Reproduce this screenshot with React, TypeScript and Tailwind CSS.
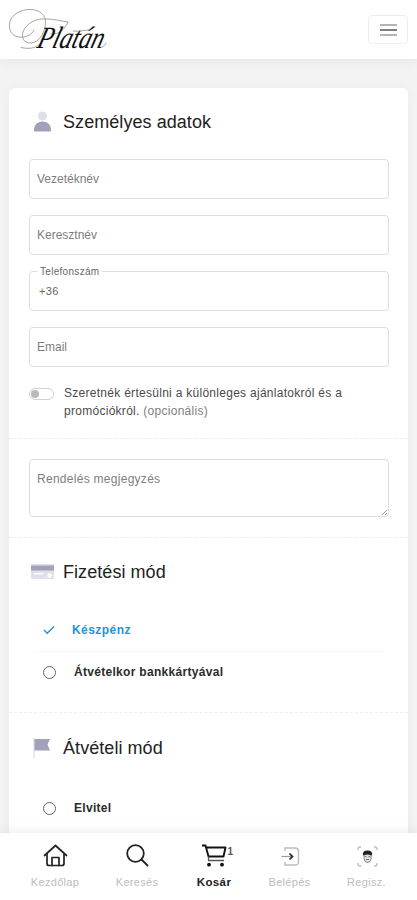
import type { ReactNode } from "react";

const NAV_LABEL = "leading-[14px] whitespace-nowrap";

function Logo() {
  return (
    <svg width="110" height="50" viewBox="0 0 110 50" className="block overflow-visible">
      <g fill="none" stroke="#9a9a9a" strokeWidth="0.9" strokeLinecap="round">
        <path d="M25 22C23 27 16 30 10 29C3 28 0 23 0.500 16C1 7 12 1 22 1.500C31 2 37 7 36.500 15C36 24 31 34 22 35C15 35 12 30 14 24C17 15 28 10 38 11C46 11 51 13 59 14" />
        <path d="M12 39.500C18 41 26 41 31 36" />
        <path d="M59 14C56 21 50 27 42 26" />
        <path d="M64 23C70 24 76 22 81 22" />
        <path d="M92 39C94 40 96 37 97 35" />
      </g>
      <g transform="translate(27 39.500) skewX(-16)">
        <text
          x="0"
          y="0"
          fill="#111"
          fontFamily="'Liberation Serif', serif"
          fontStyle="italic"
          fontSize="31"
          textLength="66"
          lengthAdjust="spacingAndGlyphs"
        >
          Platán
        </text>
      </g>
    </svg>
  );
}

function Field({ label, value }: { label: string; value?: string }) {
  return (
    <div className="relative h-10 rounded-sm border border-[#dcdfe2] px-2 flex items-center text-xs text-[#7b7f83]">
      {value ? (
        <>
          <span className="absolute -top-1.5 left-[7px] bg-white px-[3px] text-[10px] leading-3 text-[#666] tracking-[0.3px]">
            {label}
          </span>
          <span className="pl-px text-[11px] text-[#666] tracking-[0.3px]">{value}</span>
        </>
      ) : (
        <span className="-ml-px">{label}</span>
      )}
    </div>
  );
}

function SectionTitle({ icon, children }: { icon: ReactNode; children: ReactNode }) {
  return (
    <div className="flex items-center h-6">
      <span className="w-[34px] flex">{icon}</span>
      <h2 className="text-[18px] leading-6 tracking-[0.06px] text-[#222]">{children}</h2>
    </div>
  );
}

function Radio({ label }: { label: string }) {
  return (
    <div className="flex items-center h-5 pl-[14px]">
      <span className="w-[13px] h-[13px] rounded-full border border-[#666]" />
      <span className="ml-[18px] text-xs font-bold tracking-[0.3px] text-[#2b2b2b]">{label}</span>
    </div>
  );
}

function UserIcon() {
  return (
    <svg width="26" height="22" viewBox="0 0 26 22">
      <circle cx="13.500" cy="5" r="4.500" fill="#dedfe8" />
      <path d="M5 19.500C5 14 8 10.500 13.500 10.500S22 14 22 19.500Q22 20.500 21 20.500H6Q5 20.500 5 19.500Z" fill="#a0a2b9" />
    </svg>
  );
}

function CardIcon() {
  return (
    <svg width="26" height="18" viewBox="0 0 26 18">
      <rect x="2" y="1" width="23" height="15" rx="1" fill="#dfe0e8" />
      <path d="M2 2.500H25V7.500H2Z" fill="#a0a2b9" />
      <path d="M5 10H14V11.500H5Z" fill="#fff" />
      <circle cx="20.500" cy="12.500" r="2.200" fill="#fff" />
    </svg>
  );
}

function FlagIcon() {
  return (
    <svg width="26" height="24" viewBox="0 0 26 24">
      <path d="M4.500 2H5.500V22.500H4.500Z" fill="#d3d4de" />
      <path d="M5.500 3H21L18.500 8.500L21 14.500H5.500Z" fill="#a0a2b9" />
    </svg>
  );
}

function HomeIcon() {
  return (
    <svg width="26" height="26" viewBox="0 0 26 26" fill="none" stroke="#222" strokeWidth="1.700" strokeLinecap="round" strokeLinejoin="round">
      <path d="M2.500 12.500L13.500 2.500L24.500 12.500" />
      <path d="M5 11V20.500Q5 22.500 7 22.500H20Q22 22.500 22 20.500V11" />
      <path d="M10 22.500V14.500H17V22.500" />
    </svg>
  );
}

function SearchIcon() {
  return (
    <svg width="26" height="26" viewBox="0 0 26 26" fill="none" stroke="#222" strokeWidth="1.800" strokeLinecap="round">
      <circle cx="11.500" cy="10.500" r="8.300" />
      <path d="M17.500 16.500L23.500 22.500" />
    </svg>
  );
}

function CartIcon() {
  return (
    <svg width="28" height="26" viewBox="0 0 28 26" fill="none" stroke="#111" strokeWidth="1.900" strokeLinejoin="round">
      <path d="M2 2.500H5.500L8.500 13.500H23.500L25.500 4.500H6" />
      <path d="M8.500 13.500V17.500H24" strokeWidth="1.300" stroke="#555" />
      <circle cx="9" cy="21.700" r="1.900" fill="#111" stroke="none" />
      <circle cx="22" cy="21.700" r="1.900" fill="#111" stroke="none" />
    </svg>
  );
}

function LoginIcon() {
  return (
    <svg width="22" height="24" viewBox="0 0 22 24" fill="none">
      <path d="M6 7V4H16Q19.500 4 19.500 7V18Q19.500 21 16 21H6V18" stroke="#bcbcbc" strokeWidth="1.400" />
      <path d="M2.500 12.500H13" stroke="#999" strokeWidth="1.200" />
      <path d="M10.500 9.500L13.500 12.500L10.500 15.500" stroke="#222" strokeWidth="1.700" />
    </svg>
  );
}

function FaceIcon() {
  return (
    <svg width="24" height="24" viewBox="0 0 24 24" fill="none">
      <path d="M3 6V5Q3 3 5 3H6M19 3H20Q22 3 22 5V6M22 19V20Q22 22 20 22H19M6 22H5Q3 22 3 20V19" stroke="#bbb" strokeWidth="1.300" />
      <path d="M9 10V15Q9.500 18.500 12.500 18.500T16 15V10Z" fill="#ddd" stroke="#888" />
      <path d="M8 11.500Q7 6.500 12.500 6.500T17 11.500Q12.500 9.500 8 11.500Z" fill="#222" />
      <path d="M10 12.500H11.500M13.500 12.500H15M11 15.500H14" stroke="#777" />
    </svg>
  );
}

const NAV_ITEMS = [
  { label: "Kezdőlap", icon: <HomeIcon />, width: "w-[82px]" },
  { label: "Keresés", icon: <SearchIcon />, width: "w-[82px]" },
  { label: "Kosár", icon: <CartIcon />, width: "w-[72px]", active: true, badge: "1" },
  { label: "Belépés", icon: <LoginIcon />, width: "w-[79px]" },
  { label: "Regisz.", icon: <FaceIcon />, width: "w-[75px]" },
];

export default function App() {
  return (
    <div className="h-[900px] flex flex-col overflow-hidden bg-[#f3f3f4] font-['Liberation_Sans',sans-serif]">
      <header className="relative h-[59px] shrink-0 bg-white flex justify-between items-start px-[9px] shadow-[0_3px_12px_rgba(0,0,0,0.05)]">
        <div className="pt-2">
          <Logo />
        </div>
        <button className="mt-[15px] w-10 h-[29px] rounded border border-[#ededee] flex flex-col items-center justify-center gap-[3px]">
          <span className="w-[17px] h-0.5 bg-[#b5b5b5]" />
          <span className="w-[17px] h-0.5 bg-[#808080]" />
          <span className="w-[17px] h-0.5 bg-[#b5b5b5]" />
        </button>
      </header>

      <main className="flex-1 min-h-0 overflow-hidden pt-[29px] px-[9px]">
        <div className="h-[800px] bg-white rounded-md shadow-[0_0_12px_rgba(0,0,0,0.04)]">
          <section className="px-5 pt-[22px] h-[351px] border-b border-dashed border-[#eeeef0]">
            <SectionTitle icon={<UserIcon />}>Személyes adatok</SectionTitle>
            <div className="mt-[25px] w-[360px] flex flex-col gap-4">
              <Field label="Vezetéknév" />
              <Field label="Keresztnév" />
              <Field label="Telefonszám" value="+36" />
              <Field label="Email" />
            </div>
            <div className="mt-[17px] flex">
              <span className="mt-1 w-[25px] h-3 rounded-full border border-[#d0d0d0] flex items-center px-px">
                <span className="w-2 h-2 rounded-full bg-[#bababa]" />
              </span>
              <p className="ml-[10px] text-xs leading-[18px] tracking-[0.28px] whitespace-nowrap text-[#4a4a4a]">
                Szeretnék értesülni a különleges ajánlatokról és a
                <br />
                promóciókról. <span className="text-[#808080]">(opcionális)</span>
              </p>
            </div>
          </section>

          <section className="px-5 pt-5 h-[99px] border-b border-dashed border-[#eeeef0]">
            <div className="relative w-[360px] h-[58px] rounded-sm border border-[#d9dde1] pl-[7px] pt-[11px] text-xs text-[#7b7f83] tracking-[0.28px]">
              Rendelés megjegyzés
              <svg width="5" height="5" className="absolute right-px bottom-px" stroke="#888" strokeWidth="0.8">
                <path d="M0 5L5 0M3 5L5 3" />
              </svg>
            </div>
          </section>

          <section className="px-5 pt-[22px] h-[175px] border-b border-dashed border-[#eeeef0]">
            <SectionTitle icon={<CardIcon />}>Fizetési mód</SectionTitle>
            <div className="mt-[36px] flex items-center h-5 pl-[14px] text-[#2493dd]">
              <svg width="12" height="10" viewBox="0 0 12 10" fill="none" stroke="currentColor" strokeWidth="1.400">
                <path d="M1 5L4.200 8.200L11 1.500" />
              </svg>
              <span className="ml-[17px] text-xs font-bold tracking-[0.45px]">Készpénz</span>
            </div>
            <div className="ml-[7px] mr-1 mt-[11px] border-t border-[#f6f6f7]" />
            <div className="mt-[10px]">
              <Radio label="Átvételkor bankkártyával" />
            </div>
          </section>

          <section className="px-5 pt-[23px]">
            <SectionTitle icon={<FlagIcon />}>Átvételi mód</SectionTitle>
            <div className="mt-[38px]">
              <Radio label="Elvitel" />
            </div>
          </section>
        </div>
      </main>

      <nav className="relative h-[67px] shrink-0 bg-white flex pl-[14px] pt-[9px] shadow-[0_-3px_10px_rgba(60,60,140,0.07)]">
        {NAV_ITEMS.map((item) => (
          <a key={item.label} className={`flex flex-col items-center ${item.width}`}>
            <span className="relative h-[27px] flex items-center justify-center">
              {item.icon}
              {item.badge && (
                <span className="absolute top-1 -right-[5px] text-[10px] leading-3 font-bold text-[#555]">
                  {item.badge}
                </span>
              )}
            </span>
            <span
              className={`mt-[6px] ${NAV_LABEL} ${
                item.active
                  ? "text-[11.5px] font-bold tracking-[0.4px] text-[#222]"
                  : "text-[11px] tracking-[0.3px] text-[#bdbdbd]"
              }`}
            >
              {item.label}
            </span>
          </a>
        ))}
      </nav>
    </div>
  );
}
